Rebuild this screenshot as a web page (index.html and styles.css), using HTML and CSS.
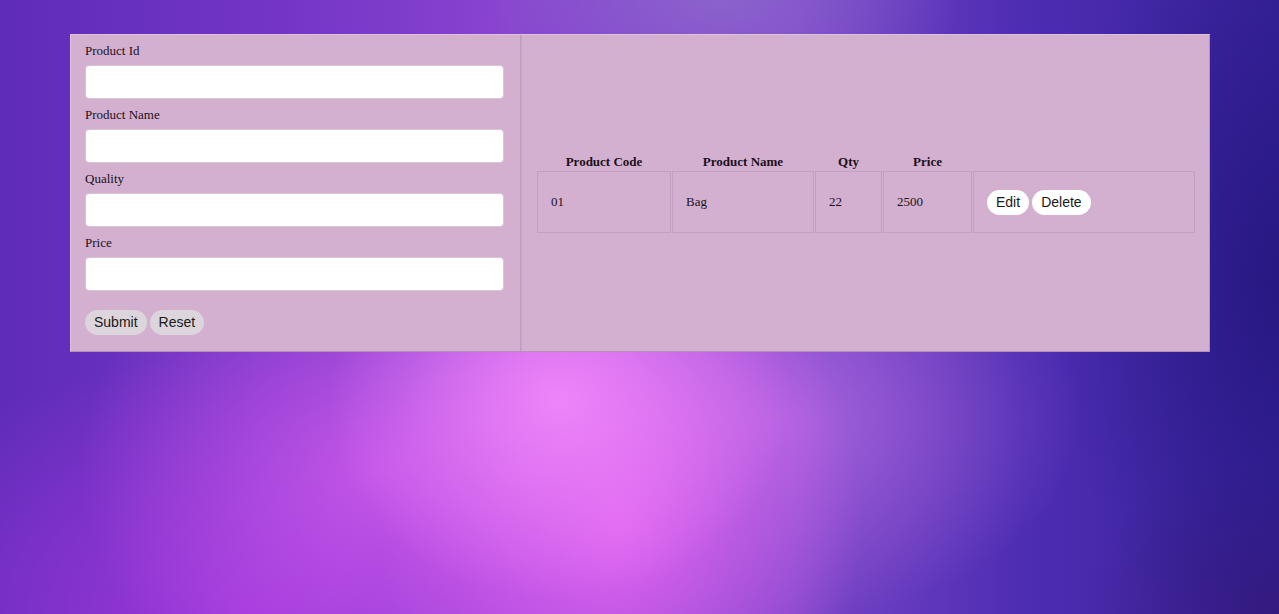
FILE: index.html
```html
<!DOCTYPE html>
<html>
<head>
<meta charset="utf-8">
<link rel="stylesheet" href="styles.css">
</head>
<body>
<div class="panel">
  <form class="form-side">
    <label class="lbl">Product Id</label>
    <input class="field" type="text">
    <label class="lbl">Product Name</label>
    <input class="field" type="text">
    <label class="lbl">Quality</label>
    <input class="field" type="text">
    <label class="lbl">Price</label>
    <input class="field" type="text">
    <div class="actions">
      <button type="button" class="btn btn-grey">Submit</button>
      <button type="button" class="btn btn-grey">Reset</button>
    </div>
  </form>
  <div class="table-side">
    <table class="data">
      <colgroup>
        <col class="c1"><col class="c2"><col class="c3"><col class="c4"><col class="c5">
      </colgroup>
      <thead>
        <tr><th>Product Code</th><th>Product Name</th><th>Qty</th><th>Price</th><th></th></tr>
      </thead>
      <tbody>
        <tr>
          <td>01</td><td>Bag</td><td>22</td><td>2500</td>
          <td><div class="row-actions"><button type="button" class="btn btn-white">Edit</button><button type="button" class="btn btn-white">Delete</button></div></td>
        </tr>
      </tbody>
    </table>
  </div>
</div>
</body>
</html>
```

FILE: styles.css
```css
html, body {
  margin: 0;
  padding: 0;
}
body {
  width: 1279px;
  height: 614px;
  overflow: hidden;
  font-family: "Liberation Serif", "Times New Roman", serif;
  background:
    radial-gradient(ellipse 230px 200px at 560px 400px, rgba(240,135,250,0.95), rgba(240,135,250,0) 100%),
    radial-gradient(ellipse 240px 320px at 620px 520px, rgba(228,100,242,0.95), rgba(228,100,242,0) 100%),
    radial-gradient(ellipse 300px 260px at 380px 470px, rgba(215,95,240,0.75), rgba(215,95,240,0) 100%),
    radial-gradient(ellipse 300px 200px at 780px 420px, rgba(200,120,235,0.6), rgba(200,120,235,0) 100%),
    radial-gradient(ellipse 240px 120px at 720px 0px, rgba(140,100,205,0.95), rgba(140,100,205,0) 100%),
    radial-gradient(ellipse 420px 260px at 250px 614px, rgba(165,55,222,0.85), rgba(165,55,222,0) 100%),
    radial-gradient(ellipse 220px 420px at 1279px 280px, rgba(35,22,125,0.85), rgba(35,22,125,0) 100%),
    radial-gradient(ellipse 200px 160px at 1279px 614px, rgba(55,25,120,0.8), rgba(55,25,120,0) 100%),
    linear-gradient(to right, #5e2cb8 0%, #7435c6 22%, #8a44d0 40%, #7a45c8 62%, #4d2db2 80%, #3a239e 100%);
}
.panel {
  margin: 34px 0 0 70px;
  width: 1140px;
  height: 318px;
  box-sizing: border-box;
  display: flex;
  background: #d3b0cf;
  border: 1px solid;
  border-color: #dcc3da #b690b8 #b690b8 #dcc3da;
}
.form-side {
  width: 450px;
  box-sizing: border-box;
  padding: 8px 16px 0 14px;
  border-right: 1px solid #bf9dc0;
  box-shadow: 1px 0 0 #dfc6dd;
  display: flex;
  flex-direction: column;
  margin: 0;
}
.lbl {
  display: block;
  font-size: 13px;
  line-height: 15px;
  color: #1c1020;
}
.field {
  display: block;
  margin: 7px 0 8px 0;
  width: 419px;
  height: 34px;
  box-sizing: border-box;
  border: 1px solid #d8c4d8;
  border-radius: 4px;
  background: #ffffff;
}
.actions {
  display: flex;
  gap: 3px;
  margin-top: 11px;
}
.btn {
  font-family: "Liberation Sans", Arial, sans-serif;
  font-size: 14px;
  height: 25px;
  line-height: 23px;
  padding: 0 8px;
  border: 1px solid transparent;
  border-radius: 13px;
  color: #1a1a1a;
  cursor: pointer;
}
.btn-grey {
  background: #dcd5db;
}
.btn-white {
  background: #ffffff;
}
.table-side {
  flex: 1;
  display: flex;
  align-items: center;
  padding: 0 14px 0 14px;
  border-left: 1px solid #c7a6c7;
}
.data {
  width: 658px;
  table-layout: fixed;
  border-collapse: separate;
  border-spacing: 1px;
  font-size: 13px;
  color: #1c1020;
}
.c1 { width: 134px; }
.c2 { width: 142px; }
.c3 { width: 67px; }
.c4 { width: 89px; }
.c5 { width: 222px; }
.data th {
  font-weight: bold;
  text-align: center;
  padding: 0;
  height: 16px;
  line-height: 16px;
}
.data td {
  height: 60px;
  padding: 0 0 0 13px;
  border: 1px solid #c1a0c1;
  vertical-align: middle;
}
.row-actions {
  display: flex;
  gap: 3px;
  margin-top: 2px;
}
```
